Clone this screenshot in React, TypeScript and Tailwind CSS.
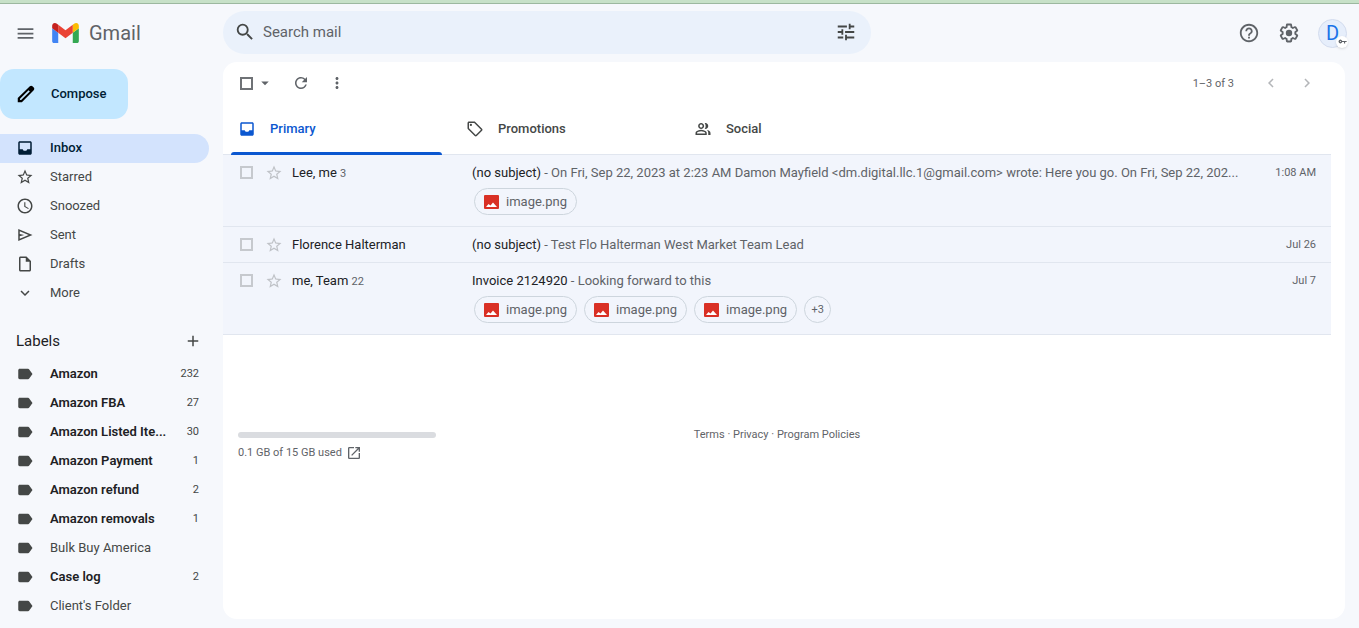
import { useState } from "react";
import {
  MdAdd,
  MdArrowDropDown,
  MdChevronLeft,
  MdChevronRight,
  MdExpandMore,
  MdHelpOutline,
  MdLabel,
  MdMenu,
  MdMoreVert,
  MdOpenInNew,
  MdOutlineInsertDriveFile,
  MdRefresh,
  MdSchedule,
  MdSearch,
  MdStarBorder,
  MdTune,
} from "react-icons/md";

type Mail = {
  id: number;
  from: string;
  count?: number;
  subject: string;
  snippet: string;
  files: number;
  more?: number;
  date: string;
};

const folders = [
  { name: "Inbox", icon: <InboxIcon /> },
  { name: "Starred", icon: <MdStarBorder size={18} /> },
  { name: "Snoozed", icon: <MdSchedule size={18} /> },
  { name: "Sent", icon: <SendIcon /> },
  { name: "Drafts", icon: <MdOutlineInsertDriveFile size={18} /> },
  { name: "More", icon: <MdExpandMore size={18} /> },
];

const labels = [
  { name: "Amazon", unread: 232 },
  { name: "Amazon FBA", unread: 27 },
  { name: "Amazon Listed Ite...", unread: 30 },
  { name: "Amazon Payment", unread: 1 },
  { name: "Amazon refund", unread: 2 },
  { name: "Amazon removals", unread: 1 },
  { name: "Bulk Buy America", unread: 0 },
  { name: "Case log", unread: 2 },
  { name: "Client's Folder", unread: 0 },
];

const tabs = [
  { name: "Primary", icon: <InboxIcon /> },
  { name: "Promotions", icon: <TagIcon /> },
  { name: "Social", icon: <PeopleIcon /> },
];

const mails: Mail[] = [
  {
    id: 1,
    from: "Lee, me",
    count: 3,
    subject: "(no subject)",
    snippet:
      "On Fri, Sep 22, 2023 at 2:23 AM Damon Mayfield <dm.digital.llc.1@gmail.com> wrote: Here you go. On Fri, Sep 22, 202...",
    files: 1,
    date: "1:08 AM",
  },
  {
    id: 2,
    from: "Florence Halterman",
    subject: "(no subject)",
    snippet: "Test Flo Halterman West Market Team Lead",
    files: 0,
    date: "Jul 26",
  },
  {
    id: 3,
    from: "me, Team",
    count: 22,
    subject: "Invoice 2124920",
    snippet: "Looking forward to this",
    files: 3,
    more: 3,
    date: "Jul 7",
  },
];

function InboxIcon() {
  return (
    <svg width="18" height="18" viewBox="0 0 24 24" fill="currentColor">
      <path d="M19 3H5c-1.1 0-2 .9-2 2v14c0 1.1.9 2 2 2h14c1.1 0 2-.9 2-2V5c0-1.1-.9-2-2-2zm0 10.500h-4c0 1.1-1.35 2.2-3 2.2s-3-1.1-3-2.2H5V5h14v8.500z" />
    </svg>
  );
}

function SendIcon() {
  return (
    <svg width="18" height="18" viewBox="0 0 24 24" fill="currentColor">
      <path d="M3 20V4l19 8-19 8zm2-3l11.85-5L5 7v3.5l6 1.5-6 1.5V17z" />
    </svg>
  );
}

function TagIcon() {
  return (
    <svg width="18" height="18" viewBox="0 0 24 24" fill="currentColor">
      <path d="M21.41 11.58l-9-9C12.05 2.22 11.55 2 11 2H4c-1.1 0-2 .9-2 2v7c0 .55.22 1.05.59 1.42l9 9c.36.36.86.58 1.41.58s1.05-.22 1.41-.59l7-7c.37-.36.59-.86.59-1.41s-.23-1.06-.59-1.42zM13 20.01L4 11V4h7v-.01l9 9-7 7.02z" />
      <circle cx="6.500" cy="6.500" r="1.500" />
    </svg>
  );
}

function PeopleIcon() {
  return (
    <svg width="18" height="18" viewBox="0 0 24 24" fill="currentColor">
      <path d="M2 20v-2.8c0-.85.44-1.63 1.300-2.200C5 14 7 13 9.500 13s4.500 1 6.200 2c.86.57 1.300 1.350 1.300 2.200V20H2zm17 0v-3c0-1.500-.7-2.700-1.900-3.700 2.600.4 4.900 1.600 4.900 3.900V20h-3zM9.500 12c-2.200 0-4-1.800-4-4s1.800-4 4-4 4 1.800 4 4-1.800 4-4 4zm4.700-.2c.8-.9 1.300-2 1.300-3.800s-.5-2.900-1.300-3.800c2.500-.8 4.800 1.300 4.800 3.800s-2.300 4.600-4.800 3.800zM4 18h11v-.8c0-1.200-3.500-2.200-5.500-2.200S4 16 4 17.200v.8zm5.500-8c1.100 0 2-.9 2-2s-.9-2-2-2-2 .9-2 2 .9 2 2 2z" />
    </svg>
  );
}

function KeyIcon() {
  return (
    <svg width="9" height="9" viewBox="0 0 24 24" fill="currentColor">
      <path d="M11.2 10.500a5 5 0 1 0 0 3H16V17h3v-3.500h4v-3H11.200zM6.500 13.500a1.500 1.500 0 1 1 0-3 1.500 1.500 0 0 1 0 3z" />
    </svg>
  );
}

function PencilIcon() {
  return (
    <svg width="22" height="22" viewBox="0 0 24 24" fill="currentColor">
      <path d="M5.500 18.500h1.2l9.500-9.280-1.420-1.420L5.500 17.300v1.200zM3 21v-4.600L16.2 3.580c.4-.38.9-.58 1.42-.58.54 0 1.05.2 1.43.6L20.43 5c.38.38.57.88.57 1.4s-.2 1.05-.58 1.43L7.500 21H3z" />
    </svg>
  );
}

function GearIcon() {
  return (
    <svg width="22" height="22" viewBox="0 0 24 24" fill="currentColor">
      <path d="M13.85 22.25h-3.7c-.74 0-1.36-.54-1.45-1.27l-.27-1.89c-.27-.14-.53-.29-.79-.46l-1.8.72c-.7.26-1.47-.03-1.81-.65L2.2 15.53c-.35-.66-.2-1.44.36-1.88l1.53-1.19c-.01-.15-.02-.3-.02-.46 0-.15.01-.31.02-.46l-1.52-1.19c-.59-.45-.74-1.26-.37-1.88l1.85-3.19c.34-.62 1.11-.9 1.79-.63l1.81.73c.26-.17.52-.32.78-.46l.27-1.91c.09-.7.71-1.25 1.44-1.25h3.7c.74 0 1.36.54 1.45 1.27l.27 1.89c.27.14.53.29.79.46l1.8-.72c.71-.26 1.48.03 1.82.65l1.84 3.18c.36.66.2 1.44-.36 1.88l-1.52 1.19c.01.15.02.3.02.46s-.01.31-.02.46l1.52 1.19c.56.45.72 1.23.37 1.86l-1.86 3.22c-.34.62-1.11.9-1.8.63l-1.8-.72c-.26.17-.52.32-.78.46l-.27 1.91c-.1.68-.72 1.22-1.46 1.22zm-3.23-2h2.76l.37-2.55.53-.22c.44-.18.88-.44 1.34-.78l.45-.34 2.38.96 1.38-2.4-2.03-1.58.07-.56c.03-.26.06-.51.06-.78s-.03-.53-.06-.78l-.07-.56 2.03-1.58-1.39-2.4-2.39.96-.45-.35c-.42-.32-.87-.58-1.33-.77l-.52-.22-.37-2.55h-2.76l-.37 2.55-.53.21c-.44.19-.88.44-1.34.79l-.45.33-2.38-.95-1.39 2.39 2.03 1.58-.07.56a7 7 0 0 0-.06.79c0 .26.02.53.06.78l.07.56-2.03 1.58 1.38 2.4 2.39-.96.45.35c.43.33.86.58 1.33.77l.53.22.38 2.55z" />
      <circle cx="12" cy="12" r="3.5" />
    </svg>
  );
}

function GmailLogo() {
  return (
    <svg width="27" height="20" viewBox="52 42 88 66">
      <path fill="#4285f4" d="M58 108h14V74L52 59v43c0 3.32 2.69 6 6 6" />
      <path fill="#34a853" d="M120 108h14c3.32 0 6-2.69 6-6V59l-20 15" />
      <path fill="#fbbc04" d="M120 48v26l20-15v-8c0-7.42-8.47-11.65-14.4-7.2" />
      <path fill="#ea4335" d="M72 74V48l24 18 24-18v26L96 92" />
      <path fill="#c5221f" d="M52 51v8l20 15V48l-5.6-4.2c-5.94-4.45-14.4-.22-14.4 7.2" />
    </svg>
  );
}

function ImageIcon() {
  return (
    <svg width="15" height="14" viewBox="0 0 15 14">
      <rect width="15" height="14" rx="1" fill="#d93025" />
      <path d="M2 12l2.500-3L6.500 10.500 9 7.500 13 12z" fill="#fff" />
    </svg>
  );
}

function Attachment({ name }: { name: string }) {
  return (
    <button className="flex h-[27px] items-center gap-[7px] rounded-full border border-[#cdd5dd] px-[9px] text-[13px] text-[#5f6368]">
      <ImageIcon />
      {name}
    </button>
  );
}

function MailRow({ mail }: { mail: Mail }) {
  return (
    <li className="border-t border-[#e1e6ef] bg-[#f2f5fc]">
      <div className="flex h-[35px] items-center pr-[15px] pl-[17px]">
        <input
          type="checkbox"
          aria-label={`Select ${mail.from}`}
          className="size-[13px] appearance-none border-2 border-[#c6c9ce]"
        />
        <button aria-label="Star" className="ml-3 text-[#bfc2c7]">
          <MdStarBorder size={18} />
        </button>
        <p className="ml-[9px] w-[180px] shrink-0 text-[13px] text-[#202124]">
          {mail.from}{" "}
          {mail.count && (
            <span className="text-[11px] text-[#5f6368]">{mail.count}</span>
          )}
        </p>
        <p className="min-w-0 flex-1 truncate text-[13px] text-[#5f6368]">
          <span className="text-[#202124]">{mail.subject}</span> -{" "}
          {mail.snippet}
        </p>
        <span className="ml-4 shrink-0 text-[11px] leading-[17px] text-[#5f6368]">
          {mail.date}
        </span>
      </div>
      {mail.files > 0 && (
        <div className="-mt-[2px] flex gap-[7px] pb-[11px] pl-[251px]">
          {Array.from({ length: mail.files }, (_, i) => (
            <Attachment key={i} name="image.png" />
          ))}
          {mail.more && (
            <button className="size-[27px] rounded-full border border-[#cdd5dd] text-[11px] leading-[17px] text-[#5f6368]">
              +{mail.more}
            </button>
          )}
        </div>
      )}
    </li>
  );
}

function Header() {
  return (
    <header className="flex h-[58px] items-center pr-[12px]">
      <div className="flex w-[223px] shrink-0 items-center pl-[15px] text-[#5f6368]">
        <button aria-label="Main menu">
          <MdMenu size={21} />
        </button>
        <a href="#" className="ml-4 flex items-center gap-[10px]">
          <GmailLogo />
          <span className="text-[20px] leading-6">Gmail</span>
        </a>
      </div>
      <form className="mb-[2px] flex h-[43px] w-full max-w-[648px] items-center rounded-full bg-[#eaf1fb] pr-[14px] pl-[11px] text-[#444746]">
        <button type="button" aria-label="Search">
          <MdSearch size={22} />
        </button>
        <input
          type="text"
          aria-label="Search mail"
          placeholder="Search mail"
          className="ml-[7px] min-w-0 flex-1 bg-transparent text-[15px] outline-none placeholder:text-[#5f6368]"
        />
        <button type="button" aria-label="Search options">
          <MdTune size={22} />
        </button>
      </form>
      <div className="ml-auto flex items-center gap-[18px] pl-4 text-[#5f6368]">
        <button aria-label="Support">
          <MdHelpOutline size={22} />
        </button>
        <button aria-label="Settings">
          <GearIcon />
        </button>
        <button
          aria-label="Account"
          className="relative size-[29px] rounded-full border border-[#d3dcee] bg-[#e6eefb] text-[20px] leading-6 text-[#1a73e8]"
        >
          D
          <span className="absolute -right-[2px] -bottom-px flex size-3 items-center justify-center rounded-full bg-white text-[#5f6368] shadow">
            <KeyIcon />
          </span>
        </button>
      </div>
    </header>
  );
}

function Sidebar() {
  const [active, setActive] = useState("Inbox");

  return (
    <aside className="w-[223px] shrink-0 overflow-hidden pt-[7px] pr-[14px]">
      <button className="flex h-[50px] w-[128px] items-center gap-[14px] rounded-[14px] bg-[#c2e7ff] pl-[15px] text-[13px] font-medium text-[#001d35]">
        <span className="text-black">
          <PencilIcon />
        </span>
        Compose
      </button>
      <nav className="mt-[15px] text-[13px] text-[#444746]">
        {folders.map((folder) => (
          <a
            key={folder.name}
            href="#"
            onClick={() => setActive(folder.name)}
            className={
              active === folder.name
                ? "flex h-[29px] items-center gap-4 rounded-r-full bg-[#d3e3fd] pb-px pl-4 font-medium text-[#001d35]"
                : "flex h-[29px] items-center gap-4 rounded-r-full pb-px pl-4"
            }
          >
            {folder.icon}
            {folder.name}
          </a>
        ))}
      </nav>
      <div className="mt-5 mb-[5px] flex h-[26px] items-center justify-between pr-[7px] pl-4">
        <h2 className="text-[15px] text-[#202124]">Labels</h2>
        <button aria-label="Create new label" className="text-[#444746]">
          <MdAdd size={18} />
        </button>
      </div>
      <nav className="text-[13px] text-[#444746]">
        {labels.map((label) => (
          <a
            key={label.name}
            href="#"
            className="flex h-[29px] items-center gap-4 pr-[10px] pl-4"
          >
            <MdLabel size={18} className="shrink-0" />
            <span
              className={
                label.unread
                  ? "font-semibold whitespace-nowrap text-[#202124]"
                  : "whitespace-nowrap"
              }
            >
              {label.name}
            </span>
            {label.unread > 0 && (
              <span className="ml-auto text-[11px] leading-[17px]">
                {label.unread}
              </span>
            )}
          </a>
        ))}
      </nav>
    </aside>
  );
}

function Toolbar() {
  return (
    <div className="flex h-[42px] items-center pr-[29px] pl-[17px] text-[#5f6368]">
      <input
        type="checkbox"
        aria-label="Select all"
        className="size-[13px] appearance-none border-2 border-[#6f7276]"
      />
      <button aria-label="Select" className="ml-[3px]">
        <MdArrowDropDown size={18} />
      </button>
      <button aria-label="Refresh" className="ml-[18px]">
        <MdRefresh size={18} />
      </button>
      <button aria-label="More" className="ml-[18px]">
        <MdMoreVert size={18} />
      </button>
      <span className="ml-auto text-[11px] leading-[17px]">1–3 of 3</span>
      <button aria-label="Newer" className="ml-7 text-[#b4b6b9]">
        <MdChevronLeft size={18} />
      </button>
      <button aria-label="Older" className="ml-[18px] text-[#b4b6b9]">
        <MdChevronRight size={18} />
      </button>
    </div>
  );
}

function Tabs() {
  const [active, setActive] = useState("Primary");

  return (
    <div className="flex h-[50px] pl-2" role="tablist">
      {tabs.map((tab) => (
        <div key={tab.name} className="w-[228px]">
          <button
            role="tab"
            aria-selected={active === tab.name}
            onClick={() => setActive(tab.name)}
            className={
              active === tab.name
                ? "relative flex h-full w-[211px] items-center gap-[14px] pl-[7px] text-[13px] font-medium text-[#0b57d0]"
                : "relative flex h-full w-[211px] items-center gap-[14px] pl-[7px] text-[13px] font-medium text-[#444746]"
            }
          >
            {tab.icon}
            {tab.name}
            {active === tab.name && (
              <span className="absolute inset-x-0 -bottom-px h-[3px] rounded-t-sm bg-[#0b57d0]" />
            )}
          </button>
        </div>
      ))}
    </div>
  );
}

function Footer() {
  return (
    <footer className="mt-[92px] grid grid-cols-3 text-[11px] leading-4 text-[#5f6368]">
      <div className="pl-[15px]">
        <div className="mt-[5px] h-[6px] w-[198px] rounded-full bg-[#dadce0]" />
        <a href="#" className="mt-[7px] flex items-center gap-1">
          0.1 GB of 15 GB used
          <MdOpenInNew size={16} />
        </a>
      </div>
      <p className="text-center">
        <a href="#">Terms</a> · <a href="#">Privacy</a> ·{" "}
        <a href="#">Program Policies</a>
      </p>
    </footer>
  );
}

export default function App() {
  return (
    <div className="flex h-screen flex-col overflow-hidden bg-[#f6f8fc] font-['Roboto',sans-serif]">
      <div className="h-1 shrink-0 border-b border-[#9cb89f] bg-[#c7e1c8]" />
      <Header />
      <div className="flex min-h-0 flex-1">
        <Sidebar />
        <main className="mr-[14px] mb-[9px] min-w-0 flex-1 rounded-[14px] bg-white">
          <Toolbar />
          <Tabs />
          <ul className="mr-[14px] border-b border-[#e1e6ef]">
            {mails.map((mail) => (
              <MailRow key={mail.id} mail={mail} />
            ))}
          </ul>
          <div className="mr-[14px]">
            <Footer />
          </div>
        </main>
      </div>
    </div>
  );
}
